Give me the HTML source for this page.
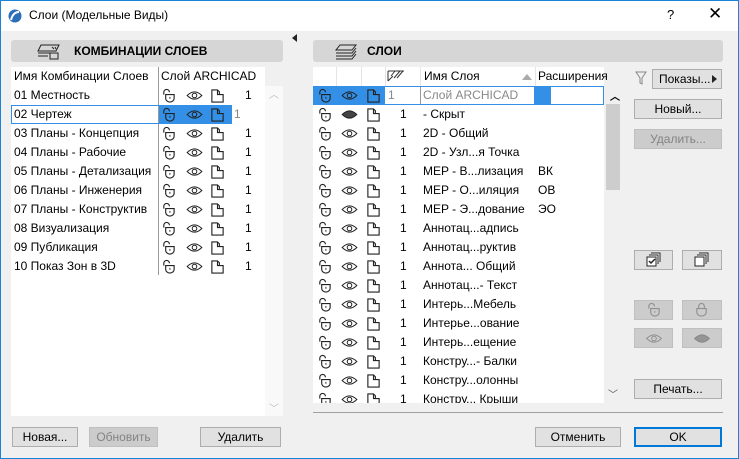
<!DOCTYPE html>
<html><head><meta charset="utf-8"><style>
*{margin:0;padding:0;box-sizing:border-box}
body{width:739px;height:459px;overflow:hidden;background:#f0f0f0;font-family:"Segoe UI","Liberation Sans","DejaVu Sans",sans-serif;font-size:12px;color:#000;position:relative}
.a{position:absolute}
.win{left:0;top:0;width:739px;height:459px;border:1px solid #1883d7}
.title{left:1px;top:1px;width:737px;height:30px;background:#fff}
.hdr{background:#d6d6d6;border-radius:3px;height:22px;font-weight:bold;font-size:12px;line-height:22px}
.list{background:#fff}
.row{position:absolute;height:19px;line-height:19px;white-space:nowrap}
.btn{position:absolute;height:20px;background:#e1e1e1;border:1px solid #adadad;text-align:center;line-height:18px;font-size:12px}
.dis{background:#cccccc;border-color:#bfbfbf;color:#838383}
svg{position:absolute}
</style></head><body>
<svg width="0" height="0" style="position:absolute">
<defs>
<symbol id="lk" viewBox="0 0 16 16"><path d="M3 7V4.5a3 3 0 0 1 6 0" fill="none" stroke="#222" stroke-width="1.2"/><path d="M5 7h9v4a4.5 4 0 0 1-9 0z" fill="none" stroke="#222" stroke-width="1.2"/><path d="M9.5 9.5v2" stroke="#222"/></symbol>
<symbol id="ey" viewBox="0 0 18 12"><path d="M1 6Q9-2 17 6Q9 14 1 6z" fill="none" stroke="#222" stroke-width="1.1"/><circle cx="9" cy="6" r="2.5" fill="none" stroke="#222" stroke-width="1.1"/></symbol>
<symbol id="eh" viewBox="0 0 18 12"><path d="M1 6Q9-2 17 6Q9 14 1 6z" fill="#444" stroke="#222"/></symbol>
<symbol id="dc" viewBox="0 0 16 16"><path d="M2 2h6l2 2v3h4v8H2z M8 2v5h6" fill="none" stroke="#222" stroke-width="1.2"/></symbol>
</defs></svg>
<div class="a win"></div>
<div class="a title"></div>
<svg style="left:8px;top:9px" width="14" height="14" viewBox="0 0 14 14"><circle cx="7" cy="7" r="6.5" fill="#2a6fb8"/><path d="M3 11Q5 3 11 3" stroke="#fff" stroke-width="2" fill="none"/></svg>
<div class="a" style="left:29px;top:8px;font-size:12px">Слои (Модельные Виды)</div>
<div class="a" style="left:667px;top:7px;font-size:13px">?</div>
<div class="a" style="left:708px;top:4px;font-size:17px">✕</div>
<div class="a" style="left:292px;top:34px;width:0;height:0;border-top:4px solid transparent;border-bottom:4px solid transparent;border-right:5px solid #222"></div>

<div class="a hdr" style="left:11px;top:40px;width:272px"><span style="position:absolute;left:63px">КОМБИНАЦИИ СЛОЕВ</span></div>
<svg style="left:36px;top:44px" width="26" height="16" viewBox="0 0 26 16"><path d="M5 1h18l-3 6H2z M2 9h14 M2 12h10 M14 9h8v6h-8z M16 3l2 2 M19 3l1 2" fill="none" stroke="#222"/></svg>
<div class="a hdr" style="left:313px;top:40px;width:410px"><span style="position:absolute;left:54px">СЛОИ</span></div>
<svg style="left:334px;top:44px" width="26" height="16" viewBox="0 0 26 16"><path d="M6 1h16l-4 5H2z M2 9h16l4-5 M2 12h16l4-5 M2 15h16l4-5" fill="none" stroke="#222"/></svg>

<!-- left list -->
<div class="a list" style="left:11px;top:67px;width:272px;height:349px"></div>
<div class="a" style="left:265px;top:86px;width:18px;height:330px;background:#f9f9f9"></div>
<div class="a" style="left:265px;top:67px;width:18px;height:19px;background:#f0f0f0"></div>
<div class="a" style="left:158px;top:67px;width:1px;height:208px;background:#999"></div>
<div class="row" style="left:14px;top:67px">Имя Комбинации Слоев</div>
<div class="row" style="left:161px;top:67px">Слой ARCHICAD</div>
<div class="a" style="left:159px;top:105px;width:73px;height:19px;background:#3390e6"></div>
<div class="a" style="left:11px;top:105px;width:254px;height:19px;border:1px solid #3390e6"></div>
<div class="a" style="left:269px;top:86px;color:#bbb;font-size:10px">︿</div>
<div class="a" style="left:269px;top:400px;color:#bbb;font-size:10px">﹀</div>
<div id="L"></div>

<!-- right list -->
<div class="a list" style="left:313px;top:67px;width:291px;height:336px"></div>
<div class="a" style="left:604px;top:86px;width:16px;height:317px;background:#f0f0f0"></div>
<div class="a" style="left:606px;top:104px;width:14px;height:86px;background:#cdcdcd"></div>
<div class="a" style="left:313px;top:86px;width:291px;height:19px;background:#fff;border:1px solid #3390e6"></div>
<div class="a" style="left:314px;top:87px;width:71px;height:17px;background:#3390e6"></div>
<div class="a" style="left:534px;top:87px;width:17px;height:17px;background:#3390e6"></div>
<div class="a" style="left:420px;top:87px;width:1px;height:17px;background:#999"></div>
<div class="a" style="left:336px;top:67px;width:1px;height:19px;background:#e5e5e5"></div>
<div class="a" style="left:361px;top:67px;width:1px;height:19px;background:#e5e5e5"></div>
<div class="a" style="left:385px;top:67px;width:1px;height:19px;background:#e5e5e5"></div>
<div class="a" style="left:420px;top:67px;width:1px;height:19px;background:#e5e5e5"></div>
<div class="a" style="left:535px;top:67px;width:1px;height:19px;background:#e5e5e5"></div>
<svg style="left:387px;top:70px" width="18" height="12" viewBox="0 0 18 12"><path d="M1 1h16M1 1v10M4 6l4-5M7 8l6-7M10 8l6-7M1 11l5-5" stroke="#333" fill="none"/></svg>
<div class="row" style="left:424px;top:67px">Имя Слоя</div>
<div class="a" style="left:522px;top:74px;width:0;height:0;border-left:5px solid transparent;border-right:5px solid transparent;border-bottom:6px solid #aaa"></div>
<div class="row" style="left:538px;top:67px">Расширения</div>
<div class="a" style="left:610px;top:88px;font-size:10px;font-weight:bold">︿</div>
<div class="a" style="left:608px;top:386px;font-size:10px;color:#555">﹀</div>
<div id="R"></div>
<div class="a" style="left:313px;top:412px;width:410px;height:1px;background:#a0a0a0"></div>

<!-- right buttons -->
<svg style="left:635px;top:71px" width="12" height="14" viewBox="0 0 12 14"><path d="M1 1h10L7 7v6L5 12V7z" fill="none" stroke="#888"/></svg>
<div class="btn" style="left:652px;top:69px;width:70px;text-align:left;padding-left:6px">Показы...<span style="position:absolute;right:4px;top:5px;border-top:4px solid transparent;border-bottom:4px solid transparent;border-left:5px solid #222"></span></div>
<div class="btn" style="left:634px;top:99px;width:88px">Новый...</div>
<div class="btn dis" style="left:634px;top:129px;width:88px">Удалить...</div>
<div class="btn" style="left:634px;top:250px;width:39px"></div>
<div class="btn" style="left:682px;top:250px;width:40px"></div>
<svg style="left:646px;top:252px" width="16" height="16" viewBox="0 0 16 16"><path d="M5 1h9v9 M3 3h9v9 M1 5h9v9H1z" fill="#fff" stroke="#222"/><path d="M3 9l2 2 4-4" stroke="#222" stroke-width="1.5" fill="none"/></svg>
<svg style="left:694px;top:252px" width="16" height="16" viewBox="0 0 16 16"><path d="M5 1h9v9 M3 3h9v9 M1 5h9v9H1z" fill="#fff" stroke="#222"/></svg>
<div class="btn dis" style="left:634px;top:300px;width:39px"></div>
<div class="btn dis" style="left:682px;top:300px;width:40px"></div>
<div class="btn dis" style="left:634px;top:328px;width:39px"></div>
<div class="btn dis" style="left:682px;top:328px;width:40px"></div>
<svg style="left:646px;top:302px;opacity:.35" width="15" height="15"><use href="#lk"/></svg>
<svg style="left:694px;top:302px;opacity:.35" width="15" height="15" viewBox="0 0 16 16"><path d="M5 7V4.5a3 3 0 0 1 6 0V7 M3 7h10v4a5 4 0 0 1-10 0z" fill="none" stroke="#222" stroke-width="1.2"/></svg>
<svg style="left:645px;top:333px;opacity:.35" width="18" height="11"><use href="#ey"/></svg>
<svg style="left:693px;top:333px;opacity:.4" width="18" height="11"><use href="#eh"/></svg>
<div class="btn" style="left:634px;top:379px;width:88px">Печать...</div>

<div class="btn" style="left:12px;top:427px;width:66px">Новая...</div>
<div class="btn dis" style="left:89px;top:427px;width:69px">Обновить</div>
<div class="btn" style="left:200px;top:427px;width:81px">Удалить</div>
<div class="btn" style="left:535px;top:427px;width:86px">Отменить</div>
<div class="btn" style="left:634px;top:427px;width:88px;border:2px solid #0078d7;line-height:16px">OK</div>

<script>
var L=["01 Местность","02 Чертеж","03 Планы - Концепция","04 Планы - Рабочие","05 Планы - Детализация","06 Планы - Инженерия","07 Планы - Конструктив","08 Визуализация","09 Публикация","10 Показ Зон в 3D"];
var h="";
L.forEach(function(t,i){var y=86+i*19;
h+='<div class="row" style="left:14px;top:'+y+'px">'+t+'</div>';
h+='<svg style="left:161px;top:'+(y+2)+'px" width="15" height="15"><use href="#lk"/></svg>';
h+='<svg style="left:186px;top:'+(y+4)+'px" width="17" height="11"><use href="#ey"/></svg>';
h+='<svg style="left:210px;top:'+(y+2)+'px" width="15" height="15"><use href="#dc"/></svg>';
h+=i==1?'<div class="row" style="left:232px;top:'+y+'px;width:33px;background:#fff;color:#888;padding-left:2px">1</div>':'<div class="row" style="left:245px;top:'+y+'px">1</div>';
});
document.getElementById("L").innerHTML=h;
var R=[["Слой ARCHICAD",""],["- Скрыт",""],["2D - Общий",""],["2D - Узл...я Точка",""],["MEP - В...лизация","ВК"],["MEP - О...иляция","ОВ"],["MEP - Э...дование","ЭО"],["Аннотац...адпись",""],["Аннотац...руктив",""],["Аннота... Общий",""],["Аннотац...- Текст",""],["Интерь...Мебель",""],["Интерье...ование",""],["Интерь...ещение",""],["Констру...- Балки",""],["Констру...олонны",""],["Констру... Крыши",""]];
h="";
R.forEach(function(r,i){var y=86+i*19;
h+='<svg style="left:317px;top:'+(y+2)+'px" width="15" height="15"><use href="#lk"/></svg>';
h+='<svg style="left:341px;top:'+(y+4)+'px" width="17" height="11"><use href="'+(i==1?'#eh':'#ey')+'"/></svg>';
h+='<svg style="left:366px;top:'+(y+2)+'px" width="15" height="15"><use href="#dc"/></svg>';
h+=i==0?'<div class="row" style="left:388px;top:'+y+'px;color:#888">1</div><div class="row" style="left:423px;top:'+y+'px;color:#888">'+r[0]+'</div>':'<div class="row" style="left:400px;top:'+y+'px">1</div><div class="row" style="left:423px;top:'+y+'px">'+r[0]+'</div><div class="row" style="left:538px;top:'+y+'px">'+r[1]+'</div>';
});
document.getElementById("R").innerHTML=h;
</script>
<div class="a" style="left:313px;top:403px;width:291px;height:9px;background:#f0f0f0"></div>
</body></html>
